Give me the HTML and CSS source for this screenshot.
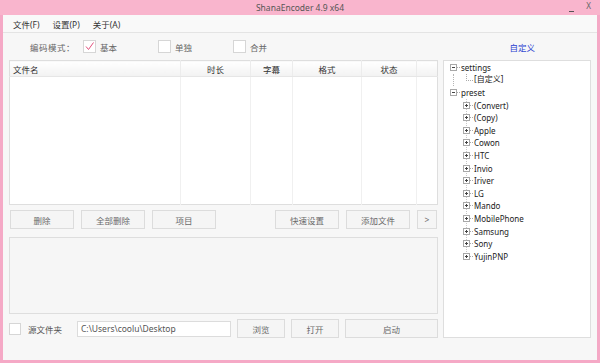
FILE: index.html
```html
<!DOCTYPE html>
<html lang="zh-CN">
<head>
    <meta charset="UTF-8">
    <meta name="viewport" content="width=device-width, initial-scale=1.0">
    <title>ShanaEncoder 4.9 x64</title>
    <link rel="stylesheet" href="styles.css">
</head>
<body>
    <div class="window">
        <div class="titlebar">
            <span></span>
            <span class="title">ShanaEncoder 4.9 x64</span>
            <span class="winbtns"><span class="min"></span><span class="close">X</span></span>
        </div>
        <div class="menubar">
            <span>文件(F)</span>
            <span>设置(P)</span>
            <span>关于(A)</span>
        </div>
        <div class="content">
            <div class="options">
                <span class="label">编码模式：</span>
                <span class="check">
                    <svg width="11" height="11" viewBox="0 0 11 11"><path d="M2 5.5 L4.5 8.5 L9.5 1.5" fill="none" stroke="#e2507d" stroke-width="1"/></svg>
                </span>
                <span class="opt opt-basic">基本</span>
                <span class="check"></span>
                <span class="opt opt-single">单独</span>
                <span class="check"></span>
                <span class="opt">合并</span>
                <span class="custom">自定义</span>
            </div>
            <div class="main">
                <div class="left">
                    <table class="files">
                        <colgroup>
                            <col style="width: 171px">
                            <col style="width: 70px">
                            <col style="width: 42px">
                            <col style="width: 69px">
                            <col style="width: 55px">
                            <col>
                        </colgroup>
                        <thead>
                            <tr>
                                <th class="name">文件名</th>
                                <th>时长</th>
                                <th>字幕</th>
                                <th>格式</th>
                                <th>状态</th>
                                <th></th>
                            </tr>
                        </thead>
                        <tbody>
                            <tr><td></td><td></td><td></td><td></td><td></td><td></td></tr>
                        </tbody>
                    </table>
                    <div class="buttons">
                        <button class="btn">删除</button>
                        <button class="btn">全部删除</button>
                        <button class="btn">项目</button>
                        <button class="btn push">快速设置</button>
                        <button class="btn">添加文件</button>
                        <button class="btn small">&gt;</button>
                    </div>
                    <div class="log"></div>
                    <div class="source">
                        <span class="check box-src"></span>
                        <span class="src-label">源文件夹</span>
                        <span class="path">C:\Users\coolu\Desktop</span>
                        <button class="btn b-browse">浏览</button>
                        <button class="btn b-open">打开</button>
                        <button class="btn b-start">启动</button>
                    </div>
                </div>
                <div class="tree">
                    <div class="row root"><span class="box minus"></span><span class="dash"></span><span class="txt">settings</span></div>
                    <div class="kids kids-settings">
                        <div class="row leaf"><span class="elbow"></span><span class="txt">[自定义]</span></div>
                    </div>
                    <div class="row root"><span class="box minus"></span><span class="dash"></span><span class="txt">preset</span></div>
                    <div class="kids kids-preset">
                        <div class="row child"><span class="box"></span><span class="dash"></span><span class="txt">(Convert)</span></div>
                        <div class="row child"><span class="box"></span><span class="dash"></span><span class="txt">(Copy)</span></div>
                        <div class="row child"><span class="box"></span><span class="dash"></span><span class="txt">Apple</span></div>
                        <div class="row child"><span class="box"></span><span class="dash"></span><span class="txt">Cowon</span></div>
                        <div class="row child"><span class="box"></span><span class="dash"></span><span class="txt">HTC</span></div>
                        <div class="row child"><span class="box"></span><span class="dash"></span><span class="txt">Invio</span></div>
                        <div class="row child"><span class="box"></span><span class="dash"></span><span class="txt">Iriver</span></div>
                        <div class="row child"><span class="box"></span><span class="dash"></span><span class="txt">LG</span></div>
                        <div class="row child"><span class="box"></span><span class="dash"></span><span class="txt">Mando</span></div>
                        <div class="row child"><span class="box"></span><span class="dash"></span><span class="txt">MobilePhone</span></div>
                        <div class="row child"><span class="box"></span><span class="dash"></span><span class="txt">Samsung</span></div>
                        <div class="row child"><span class="box"></span><span class="dash"></span><span class="txt">Sony</span></div>
                        <div class="row child"><span class="box"></span><span class="dash"></span><span class="txt">YujinPNP</span></div>
                    </div>
                </div>
            </div>
        </div>
    </div>
</body>
</html>
```

FILE: styles.css
```css
html, body {
    margin: 0;
    overflow: hidden;
}
body {
    font-family: "Noto Sans", "Noto Sans CJK SC", sans-serif;
    font-size: 8.5px;
    color: #444;
}
.window {
    width: 600px;
    height: 363px;
    box-sizing: border-box;
    background: #f7f7f7;
    border: 3px solid #f5a9c6; /* pink frame */
    border-top: 0;
    display: flex;
    flex-direction: column;
}
.titlebar {
    height: 15px;
    line-height: 15px;
    background: #f9b5cd;
    margin: 0 -3px;
    padding: 0 3px;
    display: grid;
    grid-template-columns: 1fr auto 1fr;
    align-items: center;
    color: #555;
    overflow: hidden;
}
.title {
    font-size: 8.5px;
}
.winbtns {
    justify-self: end;
    display: flex;
    align-items: flex-start;
    height: 15px;
    padding-right: 6px;
    color: #666;
}
.winbtns .min {
    width: 5px;
    height: 11px;
    border-bottom: 1px solid #555;
    margin-right: 12px;
}
.winbtns .close {
    font-size: 8px;
    line-height: 12px;
}
.menubar {
    height: 17px;
    border-bottom: 1px solid #e4e4e4;
    background: #f9f9f9;
    display: flex;
    align-items: center;
    gap: 13px;
    padding-left: 10px;
    color: #333;
}
.content {
    padding: 0 6px;
}
.options {
    height: 27px;
    display: flex;
    align-items: center;
    color: #666;
}
.options .label {
    margin-left: 21px;
    width: 53px;
    letter-spacing: 0.5px;
}
.check {
    width: 11px;
    height: 11px;
    border: 1px solid #d6d6d6;
    background: #fff;
    display: inline-flex;
}
.opt {
    margin-left: 4px;
}
.opt-basic {
    width: 58px;
}
.opt-single {
    width: 58px;
}
.custom {
    margin-left: auto;
    margin-right: 56px;
    color: #2a3fd0;
}
.main {
    display: grid;
    grid-template-columns: 429px 148px;
    gap: 5px;
    height: 277px;
}
.left {
    display: flex;
    flex-direction: column;
}
.files {
    width: 429px;
    height: 145px;
    border-collapse: collapse;
    table-layout: fixed;
    background: #fff;
    border: 1px solid #dedede;
}
.files th {
    height: 15px;
    font-weight: normal;
    color: #333;
    background: linear-gradient(#ffffff, #f2f2f2);
    border-bottom: 1px solid #e6e6e6;
    border-left: 1px solid #ececec;
    padding: 0;
    text-align: center;
}
.files th.name {
    text-align: left;
    padding-left: 3px;
    border-left: 0;
}
.files td {
    border-left: 1px solid #f0f0f0;
    padding: 0;
}
.files td:first-child {
    border-left: 0;
}
.buttons {
    display: flex;
    gap: 7px;
    margin-top: 5px;
    padding-left: 1px;
    height: 19px;
}
.btn {
    font-family: inherit;
    font-size: 8.5px;
    color: #6a6a6a;
    background: #f5f5f5;
    border: 1px solid #dcdcdc;
    width: 64px;
    height: 19px;
    padding: 0;
}
.btn.push {
    margin-left: auto;
}
.btn.small {
    width: 20px;
    margin-right: 1px;
}
.log {
    margin-top: 8px;
    height: 75px;
    border: 1px solid #dedede;
    background: #f6f6f6;
}
.source {
    margin-top: 5px;
    height: 19px;
    display: flex;
    align-items: center;
    color: #555;
}
.box-src {
    width: 10px;
    height: 10px;
}
.src-label {
    margin-left: 7px;
    width: 49px;
}
.path {
    width: 149px;
    height: 14px;
    line-height: 14px;
    padding-left: 3px;
    background: #fff;
    border: 1px solid #dcdcdc;
    color: #555;
}
.b-browse {
    margin-left: 6px;
    width: 48px;
}
.b-open {
    margin-left: 6px;
    width: 48px;
}
.b-start {
    margin-left: 6px;
    width: 93px;
}
.tree {
    background: #fff;
    border: 1px solid #dedede;
    color: #222;
    font-size: 8px;
}
.row {
    height: 12.6px;
    display: flex;
    align-items: center;
}
.row.root {
    padding-left: 6px;
}
.box {
    width: 5px;
    height: 5px;
    border: 1px solid #a8a8a8;
    background:
        linear-gradient(#444, #444) center / 3px 1px no-repeat,
        linear-gradient(#444, #444) center / 1px 3px no-repeat,
        #fff;
    flex: none;
}
.box.minus {
    background: linear-gradient(#444, #444) center / 3px 1px no-repeat, #fff;
}
.dash {
    width: 3px;
    border-top: 1px dotted #aaa;
    flex: none;
}
.txt {
    margin-left: 1px;
    white-space: nowrap;
}
.kids-settings {
    margin-left: 9px;
    border-left: 1px dotted #b5b5b5;
}
.row.leaf {
    padding-left: 12px;
    align-items: flex-start;
}
.elbow {
    width: 6px;
    height: 6px;
    border-left: 1px dotted #aaa;
    border-bottom: 1px dotted #aaa;
    flex: none;
}
.row.leaf .txt {
    margin-top: -1px;
}
.kids-preset {
    margin-left: 22px;
    border-left: 1px dotted #c8c8c8;
    height: 157px;
}
.row.child {
    margin-left: -4px;
}
```
